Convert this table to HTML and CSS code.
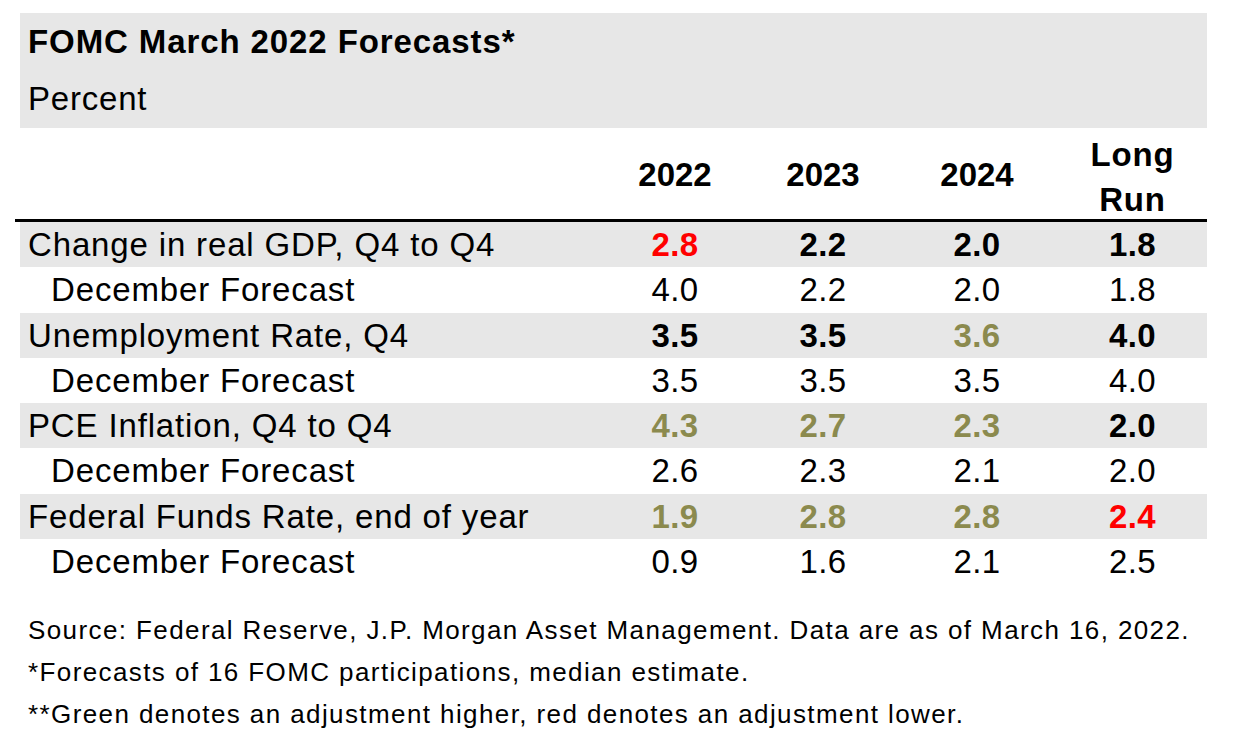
FILE: index.html
```html
<!DOCTYPE html>
<html lang="en">
<head>
<meta charset="utf-8">
<title>FOMC March 2022 Forecasts</title>
<link rel="stylesheet" href="styles.css">
</head>
<body>
<div class="sheet">
  <div class="title-box">
    <div class="title">FOMC March 2022 Forecasts*</div>
    <div class="unit">Percent</div>
  </div>

  <div class="grid head">
    <div></div>
    <div class="yr">2022</div>
    <div class="yr">2023</div>
    <div class="yr">2024</div>
    <div class="yr lr">Long<br>Run</div>
  </div>
  <div class="rule"></div>

  <div class="grid row main">
    <div class="lbl">Change in real GDP, Q4 to Q4</div>
    <div class="v b red">2.8</div>
    <div class="v b">2.2</div>
    <div class="v b">2.0</div>
    <div class="v b">1.8</div>
  </div>
  <div class="grid row sub">
    <div class="lbl">December Forecast</div>
    <div class="v">4.0</div>
    <div class="v">2.2</div>
    <div class="v">2.0</div>
    <div class="v">1.8</div>
  </div>

  <div class="grid row main">
    <div class="lbl">Unemployment Rate, Q4</div>
    <div class="v b">3.5</div>
    <div class="v b">3.5</div>
    <div class="v green">3.6</div>
    <div class="v b">4.0</div>
  </div>
  <div class="grid row sub">
    <div class="lbl">December Forecast</div>
    <div class="v">3.5</div>
    <div class="v">3.5</div>
    <div class="v">3.5</div>
    <div class="v">4.0</div>
  </div>

  <div class="grid row main">
    <div class="lbl">PCE Inflation, Q4 to Q4</div>
    <div class="v green">4.3</div>
    <div class="v green">2.7</div>
    <div class="v green">2.3</div>
    <div class="v b">2.0</div>
  </div>
  <div class="grid row sub">
    <div class="lbl">December Forecast</div>
    <div class="v">2.6</div>
    <div class="v">2.3</div>
    <div class="v">2.1</div>
    <div class="v">2.0</div>
  </div>

  <div class="grid row main">
    <div class="lbl">Federal Funds Rate, end of year</div>
    <div class="v green">1.9</div>
    <div class="v green">2.8</div>
    <div class="v green">2.8</div>
    <div class="v b red">2.4</div>
  </div>
  <div class="grid row sub">
    <div class="lbl">December Forecast</div>
    <div class="v">0.9</div>
    <div class="v">1.6</div>
    <div class="v">2.1</div>
    <div class="v">2.5</div>
  </div>

  <div class="notes">
    <p>Source: Federal Reserve, J.P. Morgan Asset Management. Data are as of March 16, 2022.</p>
    <p>*Forecasts of 16 FOMC participations, median estimate.</p>
    <p>**Green denotes an adjustment higher, red denotes an adjustment lower.</p>
  </div>
</div>
</body>
</html>
```

FILE: styles.css
```css
* {
  box-sizing: border-box;
}

html, body {
  margin: 0;
  padding: 0;
  background: #ffffff;
}

body {
  font-family: "Liberation Sans", Arial, sans-serif;
  color: #000000;
}

.sheet {
  margin: 13px 0 0 20px;
  width: 1187px;
}

.title-box {
  background: #e7e7e7;
  height: 115px;
  padding: 9px 8px 0 8px;
}

.title {
  font-size: 33px;
  font-weight: bold;
  line-height: 40px;
  letter-spacing: 0.9px;
}

.unit {
  font-size: 33px;
  line-height: 40px;
  letter-spacing: 0.8px;
  margin-top: 17px;
}

.grid {
  display: grid;
  grid-template-columns: 580px 150px 146px 162px 149px;
}

.head {
  height: 91px;
  padding-top: 4px;
  align-items: center;
}

.yr {
  text-align: center;
  font-size: 33px;
  font-weight: bold;
  line-height: 45px;
  margin-bottom: 5px;
}

.lr {
  letter-spacing: 0.8px;
  margin-bottom: 0;
}

.rule {
  height: 3px;
  background: #000000;
  margin-left: -5px;
  width: 1192px;
}

.row {
  height: 45.3px;
  align-items: center;
}

.main {
  background: #e7e7e7;
}

.lbl {
  font-size: 33px;
  line-height: 45.3px;
  letter-spacing: 0.85px;
  white-space: nowrap;
  padding-left: 8px;
}

.sub .lbl {
  padding-left: 31px;
}

.v {
  text-align: center;
  font-size: 33px;
  line-height: 45.3px;
  letter-spacing: 0.4px;
}

.b {
  font-weight: bold;
}

.red {
  color: #ff0000;
}

.green {
  color: #8b8a4e;
  font-weight: bold;
}

.notes {
  margin-top: 25px;
  padding-left: 8px;
}

.notes p {
  margin: 0;
  font-size: 26px;
  line-height: 42px;
  letter-spacing: 1.4px;
  white-space: nowrap;
}
```
